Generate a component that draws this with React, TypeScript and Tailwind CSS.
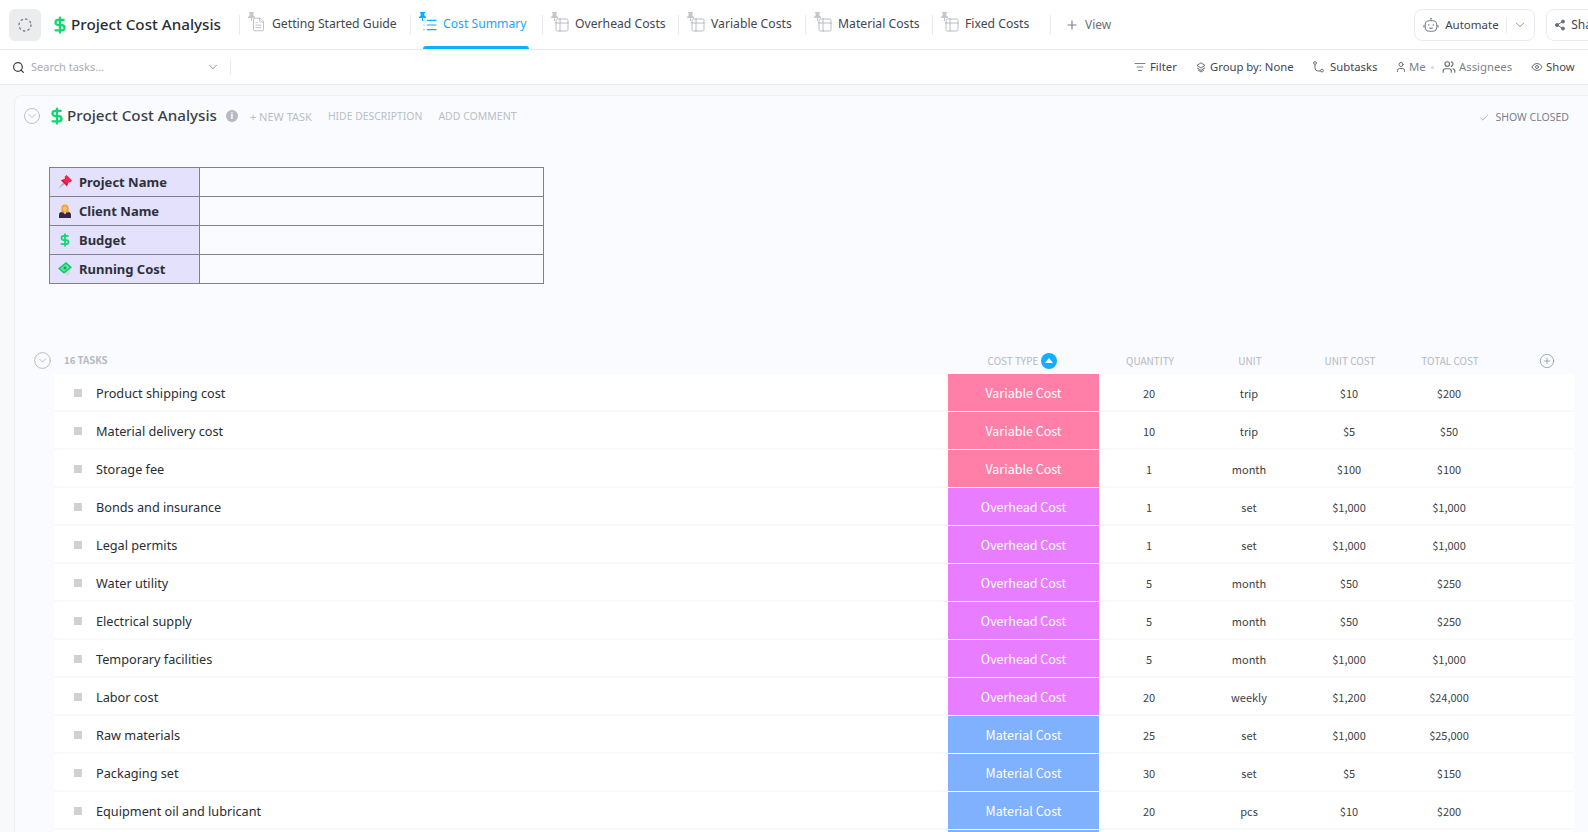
import {
  Check,
  ChevronDown,
  CircleChevronDown,
  CirclePlus,
  DollarSign,
  Eye,
  FileText,
  List,
  ListFilter,
  Plus,
  Search,
  Share2,
  Table2,
  User,
  Users,
} from "lucide-react";
import type { ReactNode } from "react";

const tasks = [
  ["Product shipping cost", "Variable Cost", "20", "trip", "$10", "$200"],
  ["Material delivery cost", "Variable Cost", "10", "trip", "$5", "$50"],
  ["Storage fee", "Variable Cost", "1", "month", "$100", "$100"],
  ["Bonds and insurance", "Overhead Cost", "1", "set", "$1,000", "$1,000"],
  ["Legal permits", "Overhead Cost", "1", "set", "$1,000", "$1,000"],
  ["Water utility", "Overhead Cost", "5", "month", "$50", "$250"],
  ["Electrical supply", "Overhead Cost", "5", "month", "$50", "$250"],
  ["Temporary facilities", "Overhead Cost", "5", "month", "$1,000", "$1,000"],
  ["Labor cost", "Overhead Cost", "20", "weekly", "$1,200", "$24,000"],
  ["Raw materials", "Material Cost", "25", "set", "$1,000", "$25,000"],
  ["Packaging set", "Material Cost", "30", "set", "$5", "$150"],
  ["Equipment oil and lubricant", "Material Cost", "20", "pcs", "$10", "$200"],
  // only the top of this row is on screen
  ["", "Material Cost", "", "", "", ""],
];

function costColor(type: string) {
  switch (type) {
    case "Variable Cost":
      return "bg-[#ff7fa8]";
    case "Overhead Cost":
      return "bg-[#e97dff]";
    default:
      return "bg-[#80b1ff]";
  }
}

function TabPin({ active }: { active?: boolean }) {
  return (
    <svg
      viewBox="0 0 7 9"
      className={`absolute left-[-4px] top-[-3px] h-[9px] w-[7px] ${active ? "text-[#12a9ff]" : "text-[#c3c7ce]"}`}
    >
      <path d="M1 0h5v1H5.4v2.4L7 5v1H0V5l1.6-1.6V1H1z" fill="currentColor" />
      <rect x="3" y="6" width="1" height="3" fill="currentColor" />
    </svg>
  );
}

function Tab({
  width,
  label,
  icon,
  active,
}: {
  width: string;
  label: string;
  icon: ReactNode;
  active?: boolean;
}) {
  return (
    <div className={`${width} flex h-full shrink-0 items-center`}>
      <div className="flex h-[20px] w-full items-center border-l border-[#e9ebf0] pl-[12px]">
        <div className="relative flex h-full items-center">
          <TabPin active={active} />
          <span className="flex w-[13px] justify-center">{icon}</span>
          <span
            className={`ml-[7px] whitespace-nowrap text-[12.2px] ${active ? "text-[#12a9ff]" : "text-[#43464f]"}`}
          >
            {label}
          </span>
          {active && (
            <span className="absolute bottom-[-14px] left-0 h-[3px] w-[106px] rounded-t-sm bg-[#12aeff]" />
          )}
        </div>
      </div>
    </div>
  );
}

function DottedCircle() {
  return (
    <svg viewBox="0 0 16 16" className="h-[16px] w-[16px]">
      <circle
        cx="8"
        cy="8"
        r="6"
        fill="none"
        stroke="#7c828d"
        strokeWidth="1.4"
        strokeLinecap="round"
        strokeDasharray="1.4 3.3"
      />
    </svg>
  );
}

function RobotIcon() {
  return (
    <svg viewBox="0 0 16 16" fill="none" stroke="#7c828d" strokeWidth="1.1" className="h-[16px] w-[16px]">
      <circle cx="8" cy="1.6" r="0.9" fill="#7c828d" stroke="none" />
      <path d="M8 2.4v1.4" />
      <rect x="2.2" y="3.8" width="11.6" height="10.4" rx="4" />
      <path d="M1 8v2.4M15 8v2.4" />
      <circle cx="5.8" cy="8" r="0.8" fill="#7c828d" stroke="none" />
      <circle cx="10.2" cy="8" r="0.8" fill="#7c828d" stroke="none" />
      <path d="M6.2 10.8c1 .7 2.6 .7 3.6 0" />
    </svg>
  );
}

function GroupIcon() {
  return (
    <svg viewBox="0 0 10 11" fill="none" stroke="#6b6f78" className="h-[11px] w-[10px]">
      <path d="M5 .8 9 3.4 5 6 1 3.4z" />
      <path d="M1 5.8 5 8.4 9 5.8" />
      <path d="M2 8 5 10 8 8" />
    </svg>
  );
}

function SubtaskIcon() {
  return (
    <svg viewBox="0 0 11 12" fill="none" stroke="#6b6f78" className="h-[12px] w-[11px]">
      <circle cx="2" cy="2" r="1.4" />
      <circle cx="9" cy="9.6" r="1.4" />
      <path d="M2 3.4V7a3 3 0 0 0 3 3h2.6" />
    </svg>
  );
}

function PinEmoji() {
  return (
    <svg viewBox="0 0 14 14" className="h-[14px] w-[14px]">
      <path d="M0 14 5 7.6 6.6 9.2z" fill="#b5b7c0" />
      <path d="M2.8 5.2 7.6 3.4 10.8 6.6 9 11.4z" fill="#e3143c" />
      <path d="M6.8 1.6 8.6 0 14 5.4 12.4 7.2 10.4 7.4 8.8 8.4 5.8 5.4 6.8 3.8z" fill="#f5244d" />
    </svg>
  );
}

function JudgeEmoji() {
  return (
    <svg viewBox="0 0 14 14" className="h-[14px] w-[14px]">
      <path d="M1 14v-3.4C1 9 2.6 8 4.2 7.6h5.6C11.4 8 13 9 13 10.6V14z" fill="#33264a" />
      <path d="M5.5 8 7 10.5 8.5 8z" fill="#f3f0f6" />
      <path d="M3.4 8.4V4a3.6 3.6 0 0 1 7.2 0v4.4z" fill="#f0a22e" />
      <ellipse cx="7" cy="4.8" rx="2.1" ry="2.6" fill="#f7c26a" />
    </svg>
  );
}

function MoneyEmoji() {
  return (
    <svg viewBox="0 0 14 14" className="h-[14px] w-[14px]">
      <path d="M5 8 8.6 13.4 10.4 14 12.4 8.6 8 6z" fill="#d4d6dc" />
      <path d="M0 6.6 8 0 14 5.2 6 11.8z" fill="#12c86a" />
      <path d="M2.4 6.5 8 1.9 11.6 5.2 6 9.8z" fill="#62eaa2" />
      <circle cx="7" cy="5.9" r="1.6" fill="#0fae5c" />
    </svg>
  );
}

function ToolItem({
  icon,
  label,
  className,
  muted,
}: {
  icon: ReactNode;
  label: string;
  className: string;
  muted?: boolean;
}) {
  return (
    <div className={`flex items-center ${className}`}>
      {icon}
      <span className={`whitespace-nowrap text-[11.3px] ${muted ? "text-[#7c828d]" : "text-[#43464f]"}`}>
        {label}
      </span>
    </div>
  );
}

const infoRows: [ReactNode, string][] = [
  [<PinEmoji key="pin" />, "Project Name"],
  [<JudgeEmoji key="judge" />, "Client Name"],
  [<DollarSign key="budget" size={16} strokeWidth={3} className="text-[#12d66f]" />, "Budget"],
  [<MoneyEmoji key="money" />, "Running Cost"],
];

export default function App() {
  return (
    <div className="h-[832px] w-full overflow-hidden bg-[#f8f9fb] font-['Noto_Sans',sans-serif] text-[#2a2e34]">
      {/* top bar */}
      <div className="flex h-[50px] items-center overflow-hidden border-b border-[#e9ebf0] bg-white">
        <div className="ml-[9px] flex h-[32px] w-[32px] shrink-0 items-center justify-center rounded-md bg-[#ebeced]">
          <DottedCircle />
        </div>
        <DollarSign size={18} strokeWidth={3} className="ml-[10px] shrink-0 text-[#12d66f]" />
        <span className="ml-[2px] w-[168px] shrink-0 whitespace-nowrap text-[15.2px] font-medium text-[#292d34]">
          Project Cost Analysis
        </span>
        <Tab width="w-[171px]" label="Getting Started Guide" icon={<FileText size={15} strokeWidth={1.4} className="shrink-0 text-[#b4b9c2]" />} />
        <Tab width="w-[132px]" active label="Cost Summary" icon={<List size={16} strokeWidth={1.8} className="shrink-0 text-[#12a9ff]" />} />
        <Tab width="w-[136px]" label="Overhead Costs" icon={<Table2 size={16} strokeWidth={1.4} className="shrink-0 text-[#b4b9c2]" />} />
        <Tab width="w-[127px]" label="Variable Costs" icon={<Table2 size={16} strokeWidth={1.4} className="shrink-0 text-[#b4b9c2]" />} />
        <Tab width="w-[127px]" label="Material Costs" icon={<Table2 size={16} strokeWidth={1.4} className="shrink-0 text-[#b4b9c2]" />} />
        <Tab width="w-[118px]" label="Fixed Costs" icon={<Table2 size={16} strokeWidth={1.4} className="shrink-0 text-[#b4b9c2]" />} />
        <div className="flex h-[20px] shrink-0 items-center border-l border-[#e9ebf0] pl-[14px]">
          <Plus size={14} strokeWidth={2} className="text-[#7c828d]" />
          <span className="ml-[6px] text-[12px] text-[#6b6f78]">View</span>
        </div>
        <div className="ml-[303px] flex h-[32px] w-[121px] shrink-0 items-center rounded-lg border border-[#e9ebf0] pl-[8px]">
          <RobotIcon />
          <span className="ml-[6px] text-[11.5px] text-[#43464f]">Automate</span>
          <span className="ml-[7px] h-[16px] border-l border-[#e9ebf0]" />
          <ChevronDown size={14} strokeWidth={1.5} className="ml-[6px] text-[#7c828d]" />
        </div>
        <div className="ml-[11px] flex h-[32px] w-[80px] shrink-0 items-center rounded-lg border border-[#e9ebf0] pl-[7px]">
          <Share2 size={12} strokeWidth={2} className="fill-[#6b6f78] text-[#6b6f78]" />
          <span className="ml-[5px] text-[12px] text-[#43464f]">Share</span>
        </div>
      </div>

      {/* toolbar */}
      <div className="flex h-[35px] items-center border-b border-[#e9ebf0] bg-white">
        <Search size={13} strokeWidth={2.2} className="ml-[12px] shrink-0 text-[#3c3f46]" />
        <span className="ml-[6px] w-[175px] shrink-0 text-[11px] text-[#a8adb6]">Search tasks...</span>
        <ChevronDown size={14} strokeWidth={1.5} className="shrink-0 text-[#7c828d]" />
        <span className="ml-[10px] h-[16px] border-l border-[#e9ebf0]" />
        <div className="ml-[903px] flex shrink-0 items-center">
          <ToolItem className="w-[62px] gap-[4px]" icon={<ListFilter size={12} className="text-[#7c828d]" />} label="Filter" />
          <ToolItem className="w-[117px] gap-[4px]" icon={<GroupIcon />} label="Group by: None" />
          <ToolItem className="w-[82px] gap-[6px]" icon={<SubtaskIcon />} label="Subtasks" />
          <ToolItem muted className="w-[36px] gap-[2px]" icon={<User size={12} className="text-[#6b6f78]" />} label="Me" />
          <span className="mr-[8px] h-[3px] w-[3px] rounded-full bg-[#d5d8dd]" />
          <ToolItem muted className="w-[89px] gap-[3px]" icon={<Users size={14} className="text-[#6b6f78]" />} label="Assignees" />
          <ToolItem className="gap-[3px]" icon={<Eye size={12} className="text-[#6b6f78]" />} label="Show" />
        </div>
      </div>

      {/* list panel */}
      <div className="ml-[14px] mt-[10px] rounded-tl-lg border-l border-t border-[#eef0f3] bg-[#fafbfe]">
        <div className="flex h-[40px] items-center">
          <CircleChevronDown size={18} strokeWidth={1} className="ml-[8px] shrink-0 text-[#a8adb6]" />
          <DollarSign size={18} strokeWidth={3} className="ml-[7px] shrink-0 text-[#12d66f]" />
          <span className="ml-[1px] mt-[-1px] shrink-0 whitespace-nowrap text-[15.2px] font-medium text-[#3c3f46]">
            Project Cost Analysis
          </span>
          <span className="ml-[9px] flex h-[12px] w-[12px] shrink-0 items-center justify-center rounded-full bg-[#b4b9c2] text-[9px] font-bold text-white">
            i
          </span>
          <span className="ml-[12px] whitespace-nowrap pt-[2px] text-[11px] text-[#b9bec7]">+ NEW TASK</span>
          <span className="ml-[16px] whitespace-nowrap pt-[2px] text-[10.4px] text-[#b9bec7]">HIDE DESCRIPTION</span>
          <span className="ml-[16px] whitespace-nowrap pt-[2px] text-[10.5px] text-[#b9bec7]">ADD COMMENT</span>
          <div className="ml-auto mr-[19px] flex items-center gap-[6px] pt-[4px] text-[#7c828d]">
            <Check size={10} strokeWidth={1.5} />
            <span className="whitespace-nowrap text-[10.5px]">SHOW CLOSED</span>
          </div>
        </div>

        <table className="ml-[34px] mt-[31px] w-[495px] table-fixed border-collapse">
          <tbody>
            {infoRows.map(([icon, label]) => (
              <tr key={label} className="h-[29px]">
                <td className="w-[150px] border border-[#7e818e] bg-[#e3e1fb] p-0">
                  <div className="flex items-center pl-[8px]">
                    <span className="flex w-[14px] justify-center">{icon}</span>
                    <span className="ml-[7px] pt-[2px] text-[13px] font-bold text-[#2f313a]">{label}</span>
                  </div>
                </td>
                <td className="border border-[#7e818e] p-0" />
              </tr>
            ))}
          </tbody>
        </table>

        <div className="ml-[19px] mt-[65px] grid h-[24px] grid-cols-[914px_151px_100px_100px_100px_100px_75px] items-center pb-[1px] text-center font-['Noto_Sans_CJK_KR',sans-serif] text-[10px] text-[#b4b9c2]">
          <div className="flex items-center text-left">
            <CircleChevronDown size={19} strokeWidth={1} className="ml-[-1px] text-[#a8adb6]" />
            <span className="ml-[12px] text-[9.6px] font-bold">16 TASKS</span>
          </div>
          <div className="flex items-center justify-center gap-[3px] pr-[2px]">
            <span>COST TYPE</span>
            <span className="flex h-[16px] w-[16px] items-center justify-center rounded-full bg-[#12aeff]">
              <span className="h-0 w-0 border-x-[4px] border-b-[5px] border-x-transparent border-b-white" />
            </span>
          </div>
          <div className="pl-[2px]">QUANTITY</div>
          <div className="pl-[2px]">UNIT</div>
          <div className="pl-[2px]">UNIT COST</div>
          <div className="pl-[2px]">TOTAL COST</div>
          <div className="flex justify-center pl-[21px]">
            <CirclePlus size={16} strokeWidth={1} className="text-[#7c828d]" />
          </div>
        </div>

        <div className="ml-[39px] mt-[1px] w-[1520px]">
          {tasks.map((task, index) => (
            <div
              key={index}
              className="grid h-[38px] grid-cols-[894px_151px_100px_100px_100px_100px_75px] items-center border-b-2 border-[#f9fafb] bg-white text-center font-['Noto_Sans_CJK_KR',sans-serif] text-[11px] text-[#3c3f46]"
            >
              <div className="flex items-center pl-[20px] text-left font-['Noto_Sans',sans-serif]">
                <span className="mt-[2px] h-[8px] w-[8px] bg-[#d0d1d3]" />
                <span className="ml-[14px] pt-[4px] text-[12.7px] text-[#2a2e34]">{task[0]}</span>
              </div>
              <div
                className={`mb-[-2px] flex h-[38px] items-center justify-center border-b border-white pt-[2px] text-[12.5px] text-white ${costColor(task[1])}`}
              >
                {task[0] && task[1]}
              </div>
              <div className="pt-[3px]">{task[2]}</div>
              <div className="pt-[3px]">{task[3]}</div>
              <div className="pt-[3px]">{task[4]}</div>
              <div className="pt-[3px]">{task[5]}</div>
              <div />
            </div>
          ))}
        </div>
      </div>
    </div>
  );
}
